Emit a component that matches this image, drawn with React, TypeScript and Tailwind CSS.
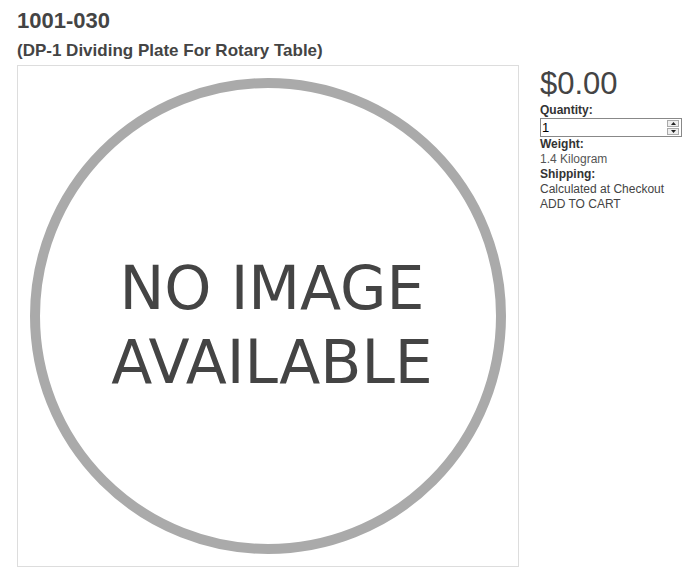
export default function App() {
  return (
    <div className="min-h-screen bg-white px-[17px] pt-[8px] font-['Liberation_Sans',Arial,sans-serif] text-[#444]">
      <h1 className="text-[22px] font-bold leading-[26px]">1001-030</h1>
      <h2 className="mt-[7px] text-[17px] font-bold leading-[20px]">
        (DP-1 Dividing Plate For Rotary Table)
      </h2>

      <div className="mt-[4px] flex items-start gap-[21px]">
        {/* product image placeholder */}
        <div className="flex h-[502px] w-[502px] shrink-0 items-center justify-center border border-[#ddd]">
          <div className="flex h-[476px] w-[476px] items-center justify-center rounded-full border-[10px] border-[#aaa]">
            <div className="ml-[8px] mt-[18px] text-center font-['DejaVu_Sans',Verdana,sans-serif] text-[60px] leading-[74px] text-[#444]">
              <div>NO IMAGE</div>
              <div>AVAILABLE</div>
            </div>
          </div>
        </div>

        <div className="flex w-[142px] flex-col pt-[3px] text-[12px] leading-[15px]">
          <div className="text-[31px] leading-[31px] text-[#444]">$0.00</div>

          <div className="mt-[4px] font-bold text-[#333]">Quantity:</div>
          <div className="relative h-[19px] w-[142px] border border-[#888] bg-white">
            <span className="pl-[1px] text-[13px] leading-[17px] text-black">1</span>
            <div className="absolute right-[2px] top-[1px] flex flex-col gap-[1px]">
              <div className="flex h-[7px] w-[12px] items-center justify-center border border-[#aaa] bg-[#eee]">
                <svg width="5" height="3" viewBox="0 0 5 3">
                  <path d="M2.5 0 L5 3 L0 3 Z" fill="#222" />
                </svg>
              </div>
              <div className="flex h-[7px] w-[12px] items-center justify-center border border-[#aaa] bg-[#eee]">
                <svg width="5" height="3" viewBox="0 0 5 3">
                  <path d="M0 0 L5 0 L2.5 3 Z" fill="#222" />
                </svg>
              </div>
            </div>
          </div>

          <div className="font-bold text-[#333]">Weight:</div>
          <div className="text-[#555]">1.4 Kilogram</div>
          <div className="font-bold text-[#333]">Shipping:</div>
          <div className="whitespace-nowrap text-[#444]">Calculated at Checkout</div>
          <div className="text-[#444]">ADD TO CART</div>
        </div>
      </div>
    </div>
  )
}
